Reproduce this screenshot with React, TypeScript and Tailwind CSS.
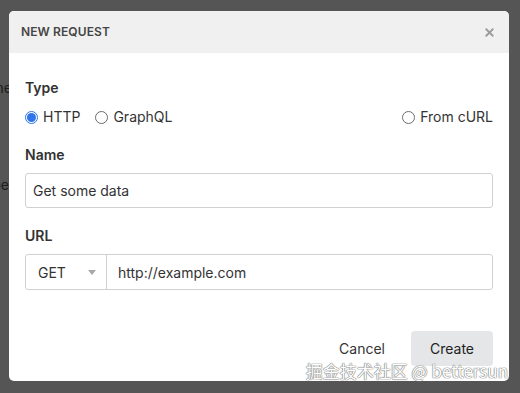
import { X } from 'lucide-react';

function Radio({ checked }: { checked?: boolean }) {
  return checked ? (
    <span className="w-[13px] h-[13px] rounded-full border border-[#2f74e8] bg-white flex items-center justify-center shrink-0">
      <span className="w-[9px] h-[9px] rounded-full bg-[#2f74e8]" />
    </span>
  ) : (
    <span className="w-[13px] h-[13px] rounded-full border border-[#6b6b6b] bg-white shrink-0" />
  );
}

export default function App() {
  return (
    <div className="relative w-[520px] h-[393px] bg-[#555555] overflow-hidden font-['Inter',sans-serif] text-[#333]">
      {/* page behind the overlay */}
      <div className="flex flex-col w-[9px] overflow-hidden text-[14px] text-[#1c1c1c] items-end">
        <span className="mt-[78px] leading-[20px] whitespace-nowrap mr-[-3px]">Done</span>
        <span className="mt-[77px] leading-[20px] whitespace-nowrap">Type</span>
      </div>

      {/* modal */}
      <div className="absolute left-[9px] top-[11px] w-[500px] h-[370px] bg-white rounded-[5px] overflow-hidden flex flex-col">
        <div className="h-[42px] bg-[#f0f0f0] flex items-center justify-between pl-[12px] pr-[13px] shrink-0">
          <span className="text-[12px] font-semibold text-[#454545] tracking-[0.1px]">NEW REQUEST</span>
          <X className="w-[13px] h-[13px] text-[#9a9a9a]" strokeWidth={3.4} />
        </div>

        <div className="flex flex-col px-[16px] pt-[25px] pb-[15px] flex-1">
          <div className="text-[14px] font-semibold leading-[20px] text-[#333]">Type</div>
          <div className="mt-[9px] flex items-center leading-[20px] text-[14px] text-[#333]">
            <label className="flex items-center gap-[5px]">
              <Radio checked />
              <span>HTTP</span>
            </label>
            <label className="flex items-center gap-[5px] ml-[15px]">
              <Radio />
              <span>GraphQL</span>
            </label>
            <label className="flex items-center gap-[5px] ml-auto">
              <Radio />
              <span>From cURL</span>
            </label>
          </div>

          <div className="mt-[18px] text-[14px] font-semibold leading-[20px] text-[#333]">Name</div>
          <div className="mt-[8px] h-[35px] border border-[#d0d0d0] rounded-[3px] flex items-center px-[7px] text-[14px] text-[#333]">
            Get some data
          </div>

          <div className="mt-[18px] text-[14px] font-semibold leading-[20px] text-[#333]">URL</div>
          <div className="mt-[8px] h-[36px] border border-[#d0d0d0] rounded-[3px] flex items-stretch text-[14px] text-[#333]">
            <div className="w-[81px] flex items-center justify-between pl-[12px] pr-[10px] border-r border-[#d0d0d0]">
              <span>GET</span>
              <svg width="8" height="5" viewBox="0 0 8 5" className="mt-[1px]">
                <path d="M0 0h8L4 5z" fill="#a8a8a8" />
              </svg>
            </div>
            <div className="flex items-center pl-[11px]">http://example.com</div>
          </div>

          <div className="mt-auto flex justify-end items-center gap-[13px]">
            <button className="h-[35px] px-[13px] text-[14px] text-[#333]">Cancel</button>
            <button className="h-[35px] w-[82px] rounded-[4px] bg-[#e4e6e8] text-[14px] text-[#222]">Create</button>
          </div>
        </div>
      </div>

      {/* watermark */}
      <div className="absolute right-[12px] top-[359px] text-[17px] leading-[24px] text-white whitespace-nowrap font-['Noto_Sans_CJK_SC',sans-serif] [text-shadow:0_0_1px_#777,0_0_1px_#777,0_0_1px_#777]">
        掘金技术社区 @ bettersun
      </div>
    </div>
  );
}
